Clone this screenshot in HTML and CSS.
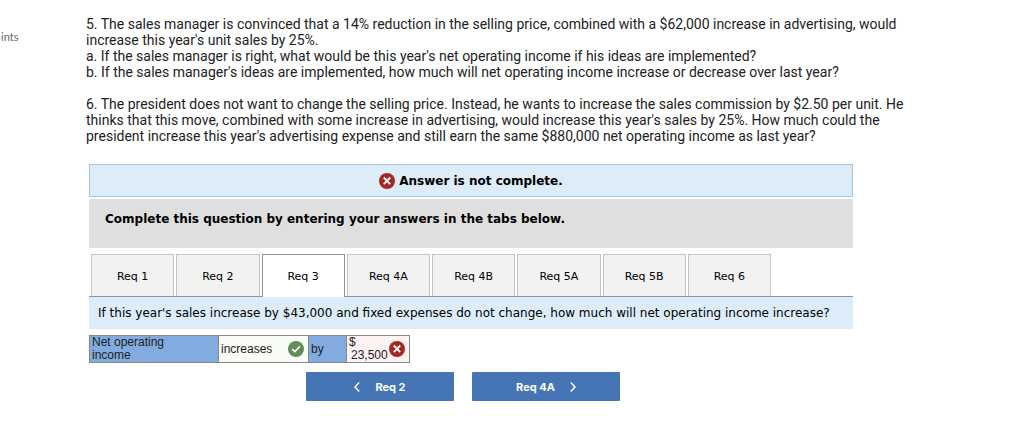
FILE: index.html
```html
<!DOCTYPE html>
<html lang="en">
<head>
<meta charset="utf-8">
<title>Net operating income question</title>
<link rel="stylesheet" href="styles.css">
</head>
<body>
<div class="page">
  <aside class="side">ints</aside>
  <main class="content">
    <div class="prompt">
      <p>5. The sales manager is convinced that a 14% reduction in the selling price, combined with a $62,000 increase in advertising, would<br>increase this year's unit sales by 25%.<br>a. If the sales manager is right, what would be this year's net operating income if his ideas are implemented?<br>b. If the sales manager's ideas are implemented, how much will net operating income increase or decrease over last year?</p>
      <p>6. The president does not want to change the selling price. Instead, he wants to increase the sales commission by $2.50 per unit. He<br>thinks that this move, combined with some increase in advertising, would increase this year's sales by 25%. How much could the<br>president increase this year's advertising expense and still earn the same $880,000 net operating income as last year?</p>
    </div>
    <section class="panel">
      <div class="status">
        <svg class="mark" viewBox="0 0 16 16" aria-hidden="true"><circle cx="8" cy="8" r="8" fill="#a52822"/><path d="M4.800 4.500l6.400 6.600M11.200 4.500l-6.400 6.600" stroke="#fff" stroke-width="1.800" fill="none"/></svg>
        <strong>Answer is not complete.</strong>
      </div>
      <div class="instruction">Complete this question by entering your answers in the tabs below.</div>
      <div class="tabs" role="tablist">
        <button class="tab" role="tab">Req 1</button>
        <button class="tab" role="tab">Req 2</button>
        <button class="tab tab-active" role="tab" aria-selected="true">Req 3</button>
        <button class="tab" role="tab">Req 4A</button>
        <button class="tab" role="tab">Req 4B</button>
        <button class="tab" role="tab">Req 5A</button>
        <button class="tab" role="tab">Req 5B</button>
        <button class="tab" role="tab">Req 6</button>
      </div>
      <div class="question">If this year's sales increase by $43,000 and fixed expenses do not change, how much will net operating income increase?</div>
      <table class="answers">
        <tr>
          <th class="col-label" scope="row">Net operating<br>income</th>
          <td class="col-choice"><div class="cell"><span>increases</span>
            <svg class="mark" viewBox="0 0 16 16" aria-hidden="true"><circle cx="8" cy="8" r="8" fill="#638c57"/><path d="M4.2 8.2l2.6 2.5 5-5.3" stroke="#fff" stroke-width="1.6" fill="none"/></svg></div></td>
          <th class="col-by">by</th>
          <td class="col-amount"><div class="cell"><span class="amount"><span>$</span><span class="value">23,500</span></span>
            <svg class="mark" viewBox="0 0 16 16" aria-hidden="true"><circle cx="8" cy="8" r="8" fill="#a52822"/><path d="M4.800 4.500l6.400 6.600M11.200 4.500l-6.400 6.600" stroke="#fff" stroke-width="1.800" fill="none"/></svg></div></td>
        </tr>
      </table>
      <nav class="pager">
        <button class="step"><svg class="arrow" viewBox="0 0 6 10" aria-hidden="true"><path d="M5.2 .6L1 5l4.2 4.4" fill="none" stroke="#fff" stroke-width="1.5"/></svg>Req 2</button>
        <button class="step">Req 4A<svg class="arrow" viewBox="0 0 6 10" aria-hidden="true"><path d="M.8 .6L5 5 .8 9.400" fill="none" stroke="#fff" stroke-width="1.5"/></svg></button>
      </nav>
    </section>
  </main>
</div>
</body>
</html>
```
FILE: styles.css
```css
* { box-sizing: border-box; }
body {
  margin: 0;
  background: #fff;
  color: #000;
  font-family: "DejaVu Sans", sans-serif;
  font-size: 12px;
}
button { font: inherit; color: inherit; margin: 0; }
.page { display: flex; }
.side {
  flex: none;
  width: 86px;
  padding: 29px 0 0 1px;
  color: #666;
  font: 11px/16px Lato, sans-serif;
}
.content { flex: 1; min-width: 0; padding: 16px 0 32px; }
.prompt {
  color: #222;
  font: 14px/16px Roboto, sans-serif;
  white-space: nowrap;
}
.prompt p { margin: 0 0 16px; }
.panel { margin: 20px 171px 0 3px; }
.status {
  display: flex;
  align-items: center;
  justify-content: center;
  gap: 4px;
  height: 33px;
  border: 1px solid #a9c3dc;
  background: #dcecf9;
}
.mark { flex: none; width: 16px; height: 16px; }
.instruction {
  margin-top: 2px;
  padding: 12px 16px 20px;
  background: #dfdfdf;
  font-weight: bold;
  line-height: 17px;
}
.tabs {
  display: grid;
  grid-template-columns: repeat(8, 1fr);
  gap: 2px;
  margin-top: 6px;
  padding: 0 82px 0 2px;
  border-bottom: 1px solid #909590;
}
.tab {
  height: 42px;
  padding: 2px 0 0;
  border: 1px solid #c4c4c4;
  border-bottom: 0;
  background: #f2f2f2;
  font-size: 11px;
}
.tab-active {
  height: 43px;
  margin-bottom: -1px;
  padding: 0;
  border-color: #909590;
  background: #fff;
}
.question { padding: 8px 9px; background: #dcecf9; line-height: 16px; white-space: nowrap; }
.answers {
  margin-top: 6px;
  border-collapse: collapse;
  table-layout: fixed;
  width: 321px;
  color: #222;
  font: 12px/13px "Liberation Sans", Arial, sans-serif;
}
.answers th, .answers td { padding: 0 4px 0 2px; border: 1px solid #888; text-align: left; font-weight: normal; }
.answers th { background: #82abe0; }
.col-label { width: 129px; }
.col-choice { width: 90px; background: #f9fbf6; }
.col-by { width: 38px; }
.col-amount { background: #fdf3f4; }
.cell { display: flex; align-items: center; justify-content: space-between; }
.amount { display: flex; flex-direction: column; }
.value { padding-left: 2px; }
.pager { display: flex; justify-content: center; gap: 18px; margin-top: 9px; padding-right: 16px; }
.step {
  display: flex;
  align-items: center;
  justify-content: center;
  gap: 15px;
  width: 148px;
  height: 29px;
  padding: 0;
  border: 0;
  border-radius: 1px;
  background: #4575b4;
  color: #fff;
  font: bold 11px/16px Inter, sans-serif;
}
.arrow { width: 6px; height: 10px; }
```
